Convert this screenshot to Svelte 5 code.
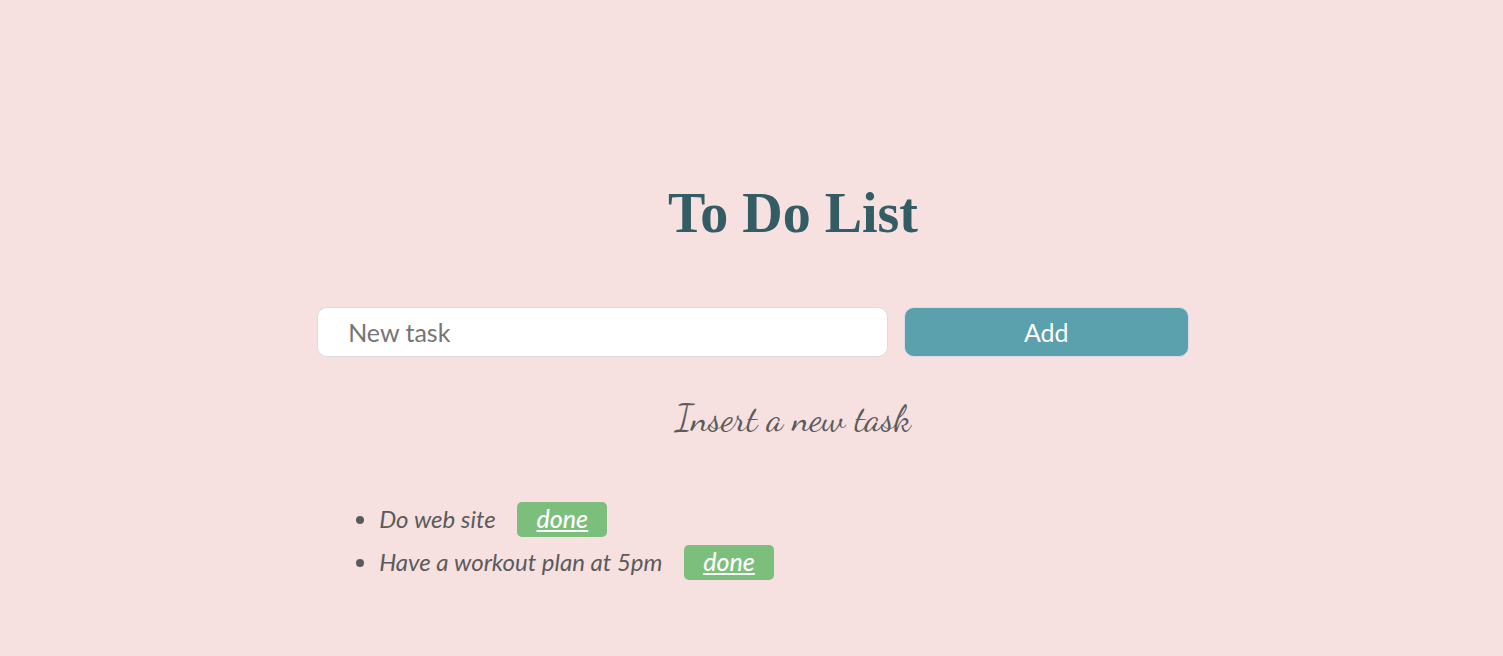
<script>
  let task = $state('');
  let tasks = $state(['Do web site', 'Have a workout plan at 5pm']);

  function add(event) {
    event.preventDefault();
    const name = task.trim();
    if (!name) return;
    tasks.push(name);
    task = '';
  }

  function complete(index) {
    tasks.splice(index, 1);
  }
</script>

<main>
  <h1>To Do List</h1>
  <form onsubmit={add}>
    <input type="text" placeholder="New task" aria-label="New task" bind:value={task} />
    <button class="add" type="submit">Add</button>
  </form>
  <p class="hint">Insert a new task</p>
  <ul>
    {#each tasks as name, index}
      <li>
        <span>{name}</span>
        <button class="done" type="button" onclick={() => complete(index)}>done</button>
      </li>
    {/each}
  </ul>
</main>

<style>
  :global(body) {
    margin: 0;
    background: #f6e1e0;
  }

  main {
    width: 58%;
    margin: 0 auto;
    padding: 180px 0 64px 3px;
    color: #5b5b5b;
    font-family: Lato, sans-serif;
  }

  h1 {
    margin: 0 0 60px;
    padding-left: 80px;
    color: #335c64;
    font: bold 56px/67px "Liberation Serif", serif;
    text-align: center;
  }

  form {
    display: grid;
    grid-template-columns: 2fr 1fr;
    gap: 16px;
  }

  input,
  .add {
    box-sizing: border-box;
    min-width: 0;
    height: 50px;
    border: 1px solid #dadae6;
    border-radius: 10px;
    font: 25px/30px Lato, sans-serif;
  }

  input {
    padding: 0 30px;
    background: #fff;
    color: #5b5b5b;
  }

  input::placeholder {
    color: #757575;
    opacity: 1;
  }

  .add {
    background: #5ba1ad;
    color: #fff;
    cursor: pointer;
  }

  .hint {
    margin: 36px 0 59px;
    padding-left: 80px;
    font: 37px/50px "Dancing Script", cursive;
    text-align: center;
  }

  ul {
    margin: 0;
    padding-left: 62px;
    font-size: 24px;
    font-style: italic;
  }

  li {
    margin-bottom: 8px;
    line-height: 33px;
  }

  .done {
    width: 90px;
    height: 35px;
    margin-left: 16px;
    padding: 0 0 2px;
    border: 0;
    border-radius: 5px;
    background: #7cbe7c;
    color: #fff;
    font: italic 500 25px/33px Lato, sans-serif;
    text-decoration: underline;
    vertical-align: top;
    cursor: pointer;
  }
</style>
